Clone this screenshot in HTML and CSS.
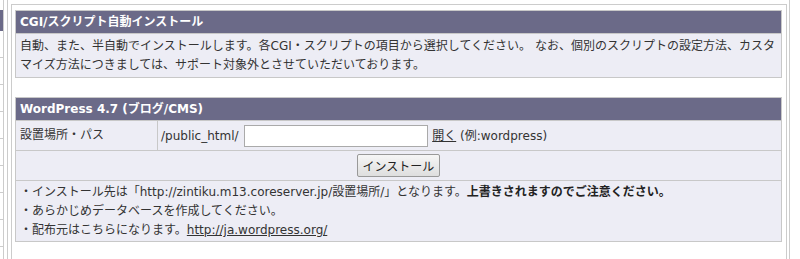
FILE: index.html
```html
<!DOCTYPE html>
<html lang="ja">
<head>
    <meta charset="UTF-8">
    <title>CGI/スクリプト自動インストール</title>
    <link rel="stylesheet" href="styles.css">
</head>
<body>

    <div class="page">
        <!-- Side menu (scrolled off) -->
        <div class="side">
            <div class="side-head"></div>
            <div class="side-item"></div>
            <div class="side-item"></div>
            <div class="side-item"></div>
            <div class="side-item"></div>
            <div class="side-item"></div>
            <div class="side-item"></div>
            <div class="side-item"></div>
            <div class="side-item"></div>
        </div>

        <!-- Main -->
        <div class="main">
            <div class="content">

                <table class="box intro">
                    <tr>
                        <th>CGI/スクリプト自動インストール</th>
                    </tr>
                    <tr>
                        <td>自動、また、半自動でインストールします。各CGI・スクリプトの項目から選択してください。 なお、個別のスクリプトの設定方法、カスタマイズ方法につきましては、サポート対象外とさせていただいております。</td>
                    </tr>
                </table>

                <table class="box">
                    <tr>
                        <th colspan="2">WordPress 4.7 (ブログ/CMS)</th>
                    </tr>
                    <tr class="path-row">
                        <td class="label">設置場所・パス</td>
                        <td>/public_html/ <input type="text" class="path-input"> <a href="#">開く</a> (例:wordpress)</td>
                    </tr>
                    <tr>
                        <td colspan="2" class="submit"><button type="button">インストール</button></td>
                    </tr>
                    <tr>
                        <td colspan="2" class="notes">
                            ・インストール先は「http://zintiku.m13.coreserver.jp/設置場所/」となります。<strong>上書きされますのでご注意ください。</strong><br>
                            ・あらかじめデータベースを作成してください。<br>
                            ・配布元はこちらになります。<a href="#">http://ja.wordpress.org/</a>
                        </td>
                    </tr>
                </table>

            </div>
        </div>
    </div>

</body>
</html>
```

FILE: styles.css
```css
/* Reset */
* {
    box-sizing: border-box;
}

body {
    margin: 0;
    font-family: "DejaVu Sans", "Noto Sans CJK JP", sans-serif;
    font-size: 12px;
    color: #333;
    background-color: #fff;
}

.page {
    display: flex;
    height: 259px;
    overflow: hidden;
}

/* Side menu */
.side {
    width: 4px;
    padding-top: 10px;
    border-right: 1px solid #ccc;
}

.side-head {
    height: 21px;
    background-color: #6b6a88;
}

.side-item {
    height: 27px;
    border-bottom: 1px solid #ccc;
}

/* Main */
.main {
    flex: 1;
    margin: 0 10px 0 3px;
    padding: 4px 2px 0 3px;
    border-left: 1px solid #ccc;
    border-right: 1px solid #ccc;
}

.content {
    height: 100%;
    padding: 5px 4px 0 3px;
    border: 1px solid #ccc;
    border-bottom: none;
}

/* Boxes */
.box {
    width: 100%;
    border-collapse: collapse;
    border: 1px solid #c8c8c8;
    background-color: #ededf5;
}

.box.intro {
    margin-bottom: 19px;
}

.box th {
    background-color: #6b6a88;
    color: #fff;
    text-align: left;
    font-weight: bold;
    line-height: 18px;
    padding: 2px 4px;
}

.box td {
    border: 1px solid #c8c8c8;
    line-height: 19px;
    padding: 3px 4px 2px;
}

.box a {
    color: #333;
}

.path-row td {
    padding: 4px 3px 3px;
}

.box td.label {
    width: 142px;
    padding-left: 4px;
    vertical-align: top;
    padding-top: 5px;
}

.path-input {
    width: 184px;
    height: 22px;
    border: 1px solid #aaa;
    margin: 0 0 0 2px;
    vertical-align: middle;
    font-size: 12px;
}

.submit {
    text-align: center;
}

.box td.submit {
    padding: 3px 4px 3px;
}

.submit button {
    height: 23px;
    padding: 0 5px;
    margin: 0;
    font-family: "Noto Sans CJK JP", sans-serif;
    font-size: 12px;
    color: #222;
    background: linear-gradient(#f6f6f6, #dedede);
    border: 1px solid #999;
    border-radius: 2px;
    vertical-align: middle;
    cursor: pointer;
}

.box td.notes {
    padding: 2px 4px 1px;
}

.notes strong {
    color: #222;
}
```
